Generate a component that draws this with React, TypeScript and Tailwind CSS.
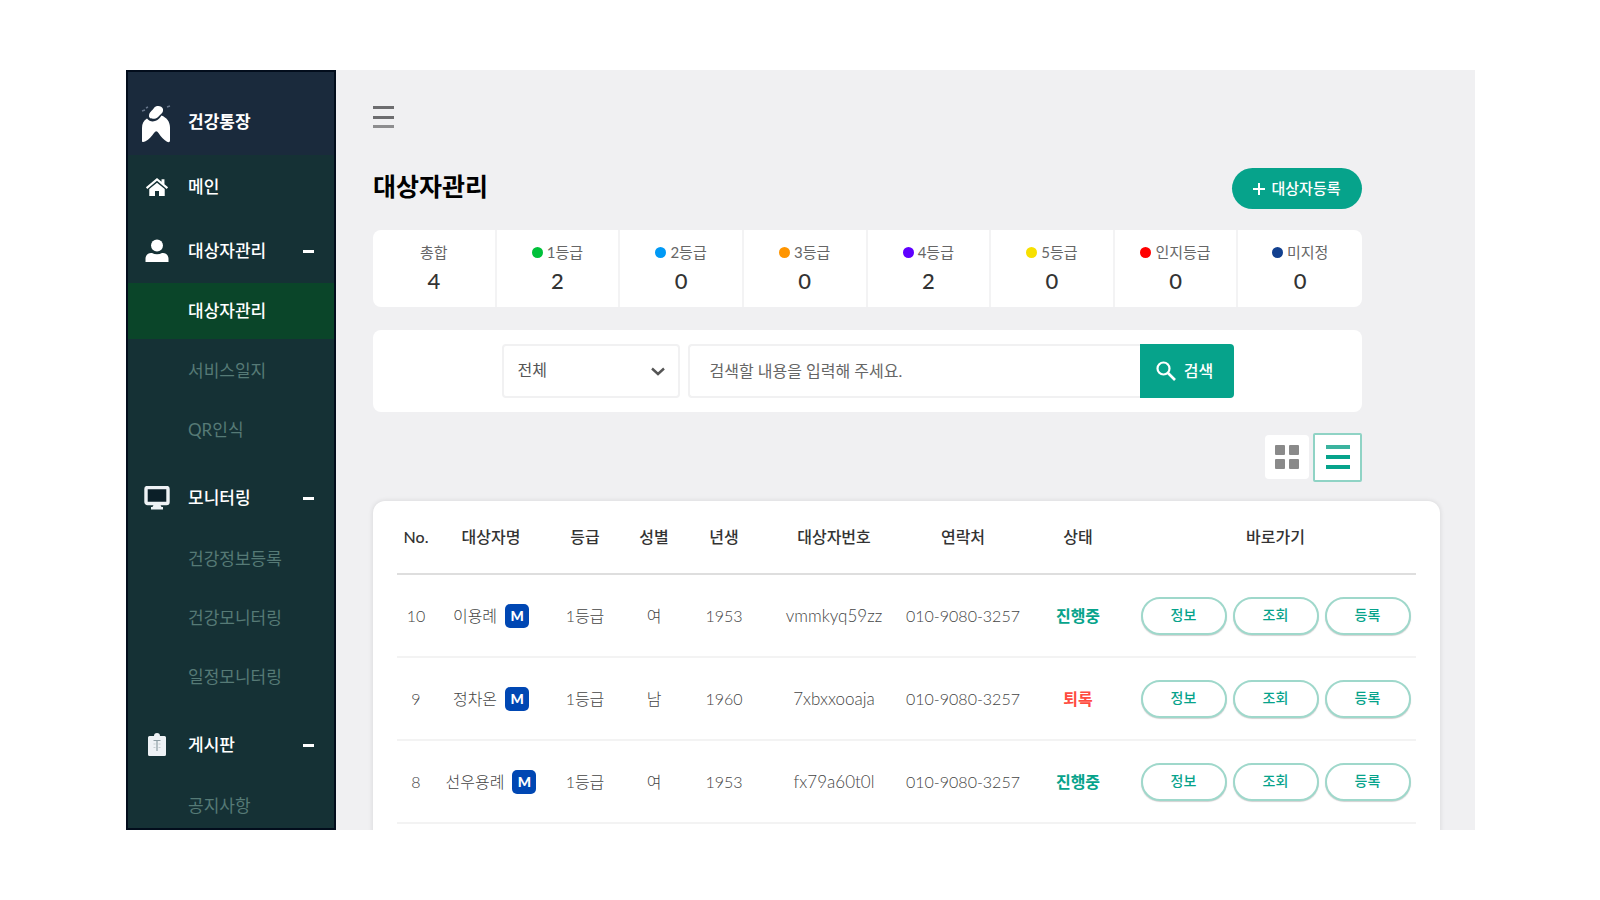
import { useState } from "react";
import type { ReactNode } from "react";

type Item = { label: string; active?: boolean };

function LogoIcon() {
  return (
    <svg viewBox="0 0 32 40" className="h-10 w-8" fill="#fff" aria-hidden="true">
      <path d="M2 37V24c0-4 1.500-7.500 5-9.500 2 2.500 5 3.500 8 2.500 3-.8 4.500-2.500 6.500-5.500 5 2 8.500 6 8.500 12v13c0 1.800-1.500 2-3 1.200-3.500-1.800-6-5-8.500-8.700-1.500-2.200-3-2.200-4.500 0-2.500 3.700-5 6.500-8.500 8.300-2 1-3.500 1-3.500-.3z" />
      <path d="M9 12c0-4 3-5 5-8 2-3 8-2.500 9 1 .5 3-1 4-3 6-2 2.500-4 4-6 3.800-3-.3-5-.5-5-2.800z" />
      <path d="M2 7l3-1M27 3l3-1M6 4l2-1" stroke="#66758a" strokeWidth="1.500" />
    </svg>
  );
}

function HomeIcon() {
  return (
    <svg viewBox="0 0 26 22" className="h-5 w-6" fill="#fff" aria-hidden="true">
      <path d="M13 1L.8 11.300l1.500 1.800L13 4.200l10.700 8.900 1.500-1.800-4-3.400V2.500h-3.200v2.700z" />
      <path d="M13 6.200L4.500 13.300V21h6.300v-5.500h4.400V21h6.300v-7.700z" />
    </svg>
  );
}

function UserIcon() {
  return (
    <svg viewBox="0 0 24 24" className="h-6 w-6" fill="#fff" aria-hidden="true">
      <circle cx="12" cy="6.500" r="6" />
      <path d="M.5 23v-3.500c0-3 2.500-5.500 5.500-5.500h1c1.500.8 3.200 1.200 5 1.200s3.500-.4 5-1.200h1c3 0 5.500 2.500 5.500 5.500V23z" />
    </svg>
  );
}

function MonitorIcon() {
  return (
    <svg viewBox="0 0 26 24" className="h-6 w-[26px]" aria-hidden="true">
      <rect x="2" y="1.500" width="22" height="16" rx="1.500" fill="#0b1f28" stroke="#eef2f5" strokeWidth="3.400" />
      <path d="M10 18h6l1.500 3H19v2.500H7V21h1.500z" fill="#eef2f5" />
    </svg>
  );
}

function ClipboardIcon() {
  return (
    <svg viewBox="0 0 20 24" className="h-6 w-5" aria-hidden="true">
      <path d="M2.500 3H7a3 3 0 0 1 6 0h4.500A1.500 1.500 0 0 1 19 4.500v17a1.500 1.500 0 0 1-1.500 1.500h-15A1.500 1.500 0 0 1 1 21.500v-17A1.500 1.500 0 0 1 2.500 3z" fill="#eef2f5" />
      <path d="M6.500 7.500h7M10 8v10" stroke="#8d9da3" strokeWidth="1.200" />
      <path d="M6.500 11h2M11.500 11h2M6.500 14.500h2M11.500 14.500h2" stroke="#c3ccd0" strokeWidth="1.200" />
    </svg>
  );
}

function MenuHeader({ icon, label, open, tall }: { icon: ReactNode; label: string; open?: boolean; tall?: boolean }) {
  return (
    <button
      type="button"
      className={`flex w-full items-center pl-4 pr-5 text-left text-[17px] font-medium text-white ${tall ? "h-16" : "mt-2 h-[62px]"}`}
    >
      <span className="flex w-[26px] justify-center">{icon}</span>
      <span className="ml-[18px] flex-1">{label}</span>
      {open && <span className="h-[3px] w-[11px] bg-white" />}
    </button>
  );
}

function SubMenu({ items }: { items: Item[] }) {
  return (
    <ul>
      {items.map((item) => (
        <li key={item.label}>
          <a
            href="#"
            className={
              item.active
                ? "mb-0.5 flex h-14 items-center bg-[#0a4529] pl-[60px] text-[17px] font-medium text-white"
                : "flex h-[59px] items-center pl-[60px] text-[17px] text-[#567a76]"
            }
          >
            {item.label}
          </a>
        </li>
      ))}
    </ul>
  );
}

const grades = [
  { label: "총합", count: 4, dot: "" },
  { label: "1등급", count: 2, dot: "bg-[#00c13a]" },
  { label: "2등급", count: 0, dot: "bg-[#0099f5]" },
  { label: "3등급", count: 0, dot: "bg-[#ff9500]" },
  { label: "4등급", count: 2, dot: "bg-[#5f00ff]" },
  { label: "5등급", count: 0, dot: "bg-[#f7e000]" },
  { label: "인지등급", count: 0, dot: "bg-[#ff0000]" },
  { label: "미지정", count: 0, dot: "bg-[#12408f]" },
];

const columns = [
  { label: "No.", width: "w-[38px]" },
  { label: "대상자명", width: "w-[112px]" },
  { label: "등급", width: "w-[76px]" },
  { label: "성별", width: "w-[62px]" },
  { label: "년생", width: "w-[78px]" },
  { label: "대상자번호", width: "w-[142px]" },
  { label: "연락처", width: "w-[116px]" },
  { label: "상태", width: "w-[114px]" },
  { label: "바로가기", width: "" },
];

const rows = [
  { no: 10, name: "이용례", grade: "1등급", sex: "여", year: 1953, code: "vmmkyq59zz", phone: "010-9080-3257", status: "진행중" },
  { no: 9, name: "정차온", grade: "1등급", sex: "남", year: 1960, code: "7xbxxooaja", phone: "010-9080-3257", status: "퇴록" },
  { no: 8, name: "선우용례", grade: "1등급", sex: "여", year: 1953, code: "fx79a60t0l", phone: "010-9080-3257", status: "진행중" },
];

export default function App() {
  const [query, setQuery] = useState("");

  return (
    <div className="h-screen overflow-hidden bg-white pb-[70px] pl-[126px] pr-[125px] pt-[70px] font-['Lato','Noto_Sans_CJK_KR',sans-serif]">
      <div className="flex h-full overflow-hidden bg-[#f0f0f2]">
        <nav className="w-[210px] shrink-0 overflow-hidden border-2 border-[#020d1c] bg-[#153135]">
          <div className="flex h-[83px] items-center bg-[#1a2a3c] pl-3 pt-5">
            <LogoIcon />
            <span className="ml-4 pb-1 text-[17px] font-bold text-white">건강통장</span>
          </div>
          <MenuHeader icon={<HomeIcon />} label="메인" tall />
          <MenuHeader icon={<UserIcon />} label="대상자관리" open tall />
          <SubMenu items={[{ label: "대상자관리", active: true }, { label: "서비스일지" }, { label: "QR인식" }]} />
          <MenuHeader icon={<MonitorIcon />} label="모니터링" open />
          <SubMenu items={[{ label: "건강정보등록" }, { label: "건강모니터링" }, { label: "일정모니터링" }]} />
          <MenuHeader icon={<ClipboardIcon />} label="게시판" open />
          <SubMenu items={[{ label: "공지사항" }]} />
        </nav>

        <main className="min-w-0 flex-1 pl-[37px] pr-[35px] pt-9">
          <button type="button" aria-label="메뉴" className="flex h-[22px] w-[21px] flex-col justify-between">
            <span className="h-[3px] w-full bg-[#6d6d6f]" />
            <span className="h-[3px] w-full bg-[#6d6d6f]" />
            <span className="h-[3px] w-full bg-[#8d8d8f]" />
          </button>

          <div className="pr-[78px]">
            <div className="mt-10 flex h-[42px] items-start justify-between">
              <h1 className="text-[25px] leading-9 font-bold text-black">대상자관리</h1>
              <button type="button" className="flex h-[41px] w-[130px] items-center justify-center gap-1.5 rounded-full bg-[#06a38b] text-[15px] font-medium text-white">
                <svg viewBox="0 0 12 12" className="h-3 w-3" stroke="#fff" strokeWidth="2" aria-hidden="true">
                  <path d="M6 0v12M0 6h12" />
                </svg>
                대상자등록
              </button>
            </div>

            <dl className="mt-5 grid h-[77px] grid-cols-8 divide-x-2 divide-[#f3f3f4] rounded-lg bg-white">
              {grades.map((g) => (
                <div key={g.label} className="flex flex-col items-center pt-3">
                  <dt className="flex items-center gap-1 text-[15px] leading-5 text-[#666]">
                    {g.dot && <span className={`h-[11px] w-[11px] rounded-full ${g.dot}`} />}
                    {g.label}
                  </dt>
                  <dd className="mt-1 text-[22px] leading-[30px] font-medium text-[#333]">{g.count}</dd>
                </div>
              ))}
            </dl>

            <form onSubmit={(e) => e.preventDefault()} className="mt-[23px] flex h-[82px] items-center justify-center rounded-lg bg-white">
              <div className="relative mr-2 h-[54px] w-[178px]">
                <select aria-label="검색 구분" className="h-full w-full appearance-none rounded border-2 border-[#f1f1f2] bg-white pb-0.5 pl-[14px] text-[16px] text-[#555]">
                  <option>전체</option>
                </select>
                <svg viewBox="0 0 14 9" className="pointer-events-none absolute right-[15px] top-[23px] h-[9px] w-[14px]" fill="none" stroke="#555" strokeWidth="2.400" aria-hidden="true">
                  <path d="M1 1.500l6 5.500 6-5.500" />
                </svg>
              </div>
              <input
                aria-label="검색어"
                value={query}
                onChange={(e) => setQuery(e.target.value)}
                placeholder="검색할 내용을 입력해 주세요."
                className="h-[54px] w-[452px] rounded-l border-2 border-r-0 border-[#f1f1f2] bg-white pb-0.5 pl-5 text-[16px] text-[#555] placeholder:text-[#666]"
              />
              <button type="submit" className="flex h-[54px] w-[94px] items-center justify-center gap-2 rounded-r bg-[#06a38b] pr-1 text-[16px] font-medium text-white">
                <svg viewBox="0 0 20 20" className="h-5 w-5" fill="none" stroke="#fff" aria-hidden="true">
                  <circle cx="7.500" cy="7.500" r="6" strokeWidth="2.200" />
                  <path d="M12 12l7 7" strokeWidth="2.600" />
                </svg>
                검색
              </button>
            </form>

            <div className="mt-5 flex h-[50px] items-center justify-end gap-1">
              <button type="button" aria-label="카드 보기" className="flex h-11 w-11 items-center justify-center rounded bg-white">
                <svg viewBox="0 0 24 24" className="h-6 w-6" fill="#8a8a8a" aria-hidden="true">
                  <rect width="10" height="10" rx="1" />
                  <rect x="14" width="10" height="10" rx="1" />
                  <rect y="14" width="10" height="10" rx="1" />
                  <rect x="14" y="14" width="10" height="10" rx="1" />
                </svg>
              </button>
              <button type="button" aria-label="목록 보기" className="flex h-[49px] w-[49px] flex-col items-center justify-center gap-[6px] rounded-xs border-2 border-[#8fd3c5] bg-white">
                <span className="h-1 w-6 bg-[#3bb39f]" />
                <span className="h-1 w-6 bg-[#06a38b]" />
                <span className="h-1 w-6 bg-[#06a38b]" />
              </button>
            </div>
          </div>

          <section className="mt-[19px] rounded-t-xl bg-white px-6 pb-20 shadow-[0_0_4px_1px_rgba(0,0,0,0.08)]">
            <table className="w-full table-fixed border-collapse text-center text-[16px]">
              <thead>
                <tr className="h-[73px] border-b-2 border-[#dedede]">
                  {columns.map((c) => (
                    <th key={c.label} scope="col" className={`p-0 font-medium whitespace-nowrap text-[#333] ${c.width}`}>
                      {c.label}
                    </th>
                  ))}
                </tr>
              </thead>
              <tbody className="font-light text-[#444]">
                {rows.map((r) => (
                  <tr key={r.no} className="h-[83px] border-b-2 border-[#f3f3f3]">
                    <td className="p-0">{r.no}</td>
                    <td className="p-0">
                      <span className="flex items-center justify-center gap-2 whitespace-nowrap">
                        {r.name}
                        <span className="flex h-6 w-6 items-center justify-center rounded-[5px] bg-[#0047b3] text-[14px] font-black text-white">M</span>
                      </span>
                    </td>
                    <td className="p-0">{r.grade}</td>
                    <td className="p-0">{r.sex}</td>
                    <td className="p-0">{r.year}</td>
                    <td className="p-0 text-[17px]">{r.code}</td>
                    <td className="p-0 whitespace-nowrap">{r.phone}</td>
                    <td className={`p-0 font-bold ${r.status === "퇴록" ? "text-[#ff4b40]" : "text-[#06a38b]"}`}>{r.status}</td>
                    <td className="p-0">
                      <div className="flex justify-center gap-1.5">
                        {["정보", "조회", "등록"].map((action) => (
                          <button key={action} type="button" className="h-[38px] w-[86px] rounded-full border-2 border-[#9fd8cb] bg-white pb-0.5 text-[14px] font-medium text-[#06a38b] shadow-[0_1px_1px_rgba(0,0,0,0.18)]">
                            {action}
                          </button>
                        ))}
                      </div>
                    </td>
                  </tr>
                ))}
              </tbody>
            </table>
          </section>
        </main>
      </div>
    </div>
  );
}
